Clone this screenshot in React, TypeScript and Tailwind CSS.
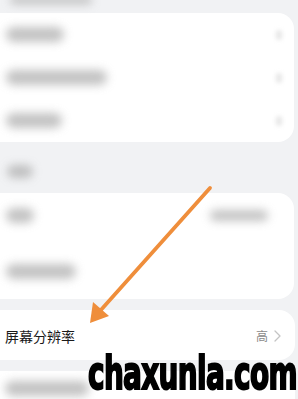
import React from "react";

const Blob = ({ w, h = 12, className = "" }: { w: number; h?: number; className?: string }) => (
  <div
    className={`rounded-full bg-[#a9a9a9] blur-[5px] opacity-70 ${className}`}
    style={{ width: w, height: h }}
  />
);

const Chev = () => <div className="w-[6px] h-[10px] rounded-full bg-[#e6e6e6] blur-[2px]" />;

export default function App() {
  return (
    <div
      className="relative w-[298px] h-[399px] overflow-hidden bg-[#f1f2f4]"
      style={{ fontFamily: '"Noto Sans CJK SC", "Noto Sans", sans-serif' }}
    >
      {/* top blurred header text */}
      <div className="h-[17px] pl-[10px]">
        <div className="-mt-[4px]">
          <Blob w={82} h={8} className="opacity-30" />
        </div>
      </div>

      {/* card 1 */}
      <div className="-ml-4 mr-[4px] bg-white rounded-2xl flex flex-col">
        <div className="h-[43px] flex items-center justify-between pl-[22px] pr-[12px]">
          <Blob w={58} h={15} />
          <Chev />
        </div>
        <div className="h-[43px] flex items-center justify-between pl-[22px] pr-[12px]">
          <Blob w={101} h={15} />
          <Chev />
        </div>
        <div className="h-[43px] flex items-center justify-between pl-[22px] pr-[12px]">
          <Blob w={56} h={15} />
          <Chev />
        </div>
      </div>

      {/* section label */}
      <div className="h-[51px] flex items-center pl-[7px] pt-[7px]">
        <Blob w={26} h={13} className="opacity-50" />
      </div>

      {/* card 2 */}
      <div className="-ml-4 mr-[4px] bg-white rounded-2xl flex flex-col">
        <div className="h-[44px] flex items-center justify-between pl-[22px] pr-[26px]">
          <Blob w={28} h={15} />
          <Blob w={58} h={11} className="opacity-40" />
        </div>
        <div className="h-[62px] flex items-center pl-[22px] pt-[6px]">
          <Blob w={70} h={15} />
        </div>
      </div>

      {/* card 3 */}
      <div className="mt-[11px] -ml-4 mr-[3px] bg-white rounded-2xl h-[50px] flex items-center justify-between pl-[21px] pr-[14px]">
        <span className="text-[14px] text-[#1a1a1a] leading-none pt-[2px]">屏幕分辨率</span>
        <div className="flex items-center gap-[6px] pt-[2px]">
          <span className="text-[12px] text-[#8a8a8a] leading-none">高</span>
          <svg width="7" height="12" viewBox="0 0 7 12" fill="none">
            <path d="M1 1l5 5-5 5" stroke="#c4c4c4" strokeWidth="1.3" strokeLinecap="round" strokeLinejoin="round" />
          </svg>
        </div>
      </div>

      {/* card 4 */}
      <div className="mt-[11px] -ml-4 mr-[3px] bg-white rounded-2xl h-[50px] flex items-start pl-[21px] pt-[10px]">
        <Blob w={84} h={15} />
      </div>

      {/* arrow */}
      <svg className="absolute left-0 top-0" width="298" height="399" viewBox="0 0 298 399">
        <line x1="210" y1="188" x2="100" y2="311" stroke="#ef8e3b" strokeWidth="3.8" strokeLinecap="round" />
        <polygon points="90,323 93,302 109,316" fill="#ef8e3b" />
      </svg>

      {/* watermark */}
      <div
        className="absolute left-[88px] top-[349px] whitespace-nowrap origin-left [transform:scaleX(0.66)] text-[47px] font-bold text-black leading-none tracking-[-1px] [-webkit-text-stroke:2px_#000] [paint-order:stroke_fill]"
        style={{ fontFamily: '"DejaVu Sans Condensed", "DejaVu Sans", sans-serif' }}
      >
        chaxunla.com
      </div>
    </div>
  );
}
